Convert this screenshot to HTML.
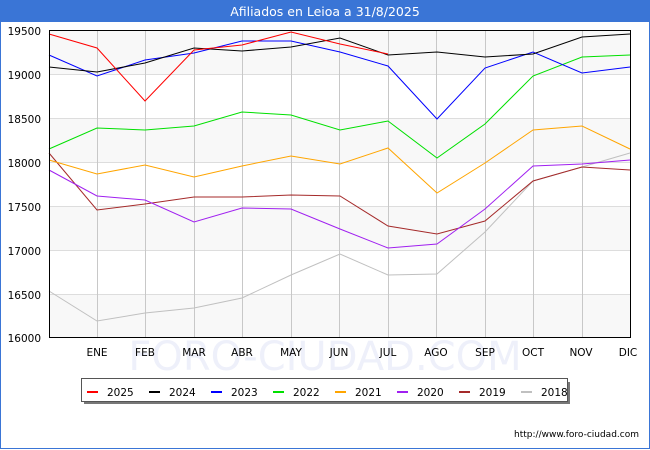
<!DOCTYPE html>
<html><head><meta charset="utf-8"><style>
body{margin:0;width:650px;height:450px;overflow:hidden;font-family:"DejaVu Sans","Liberation Sans",sans-serif;background:#fff}
.wrap{position:absolute;left:0;top:0;width:648px;height:448px;border:1px solid #3a75d6;border-top:none}
</style></head><body>
<div class="wrap"></div>
<svg width="650" height="450" style="position:absolute;left:0;top:0" font-family="DejaVu Sans, Liberation Sans, sans-serif">
<rect x="0" y="0" width="650" height="22" fill="#3a75d6"/>
<text x="325" y="16" fill="#fff" font-size="12.5" text-anchor="middle">Afiliados en Leioa a 31/8/2025</text>
<g fill="#f8f8f8">
<rect x="49" y="31" width="581" height="43"/><rect x="49" y="118" width="581" height="44"/>
<rect x="49" y="206" width="581" height="44"/><rect x="49" y="294" width="581" height="44"/>
</g>
<g stroke="#ddd" stroke-width="1">
<line x1="49" x2="630" y1="74.5" y2="74.5"/><line x1="49" x2="630" y1="118.5" y2="118.5"/>
<line x1="49" x2="630" y1="162.5" y2="162.5"/><line x1="49" x2="630" y1="206.5" y2="206.5"/>
<line x1="49" x2="630" y1="250.5" y2="250.5"/><line x1="49" x2="630" y1="294.5" y2="294.5"/>
</g>
<g stroke="#c8c8c8" stroke-width="1">
<line x1="97.5" x2="97.5" y1="31" y2="338"/><line x1="145.5" x2="145.5" y1="31" y2="338"/>
<line x1="194.5" x2="194.5" y1="31" y2="338"/><line x1="242.5" x2="242.5" y1="31" y2="338"/>
<line x1="291.5" x2="291.5" y1="31" y2="338"/><line x1="339.5" x2="339.5" y1="31" y2="338"/>
<line x1="388.5" x2="388.5" y1="31" y2="338"/><line x1="436.5" x2="436.5" y1="31" y2="338"/>
<line x1="485.5" x2="485.5" y1="31" y2="338"/><line x1="533.5" x2="533.5" y1="31" y2="338"/>
<line x1="582.5" x2="582.5" y1="31" y2="338"/>
</g>
<text x="325" y="370" font-size="40" fill="#eef0fa" text-anchor="middle">FORO-CIUDAD.COM</text>
<g fill="none" stroke-width="1">
<polyline stroke="#c0c0c0" points="49,291 97,321 145,313 194,308 242,298 291,275 340,254 388,275 437,274 485,232 533,181 582,167 630,153"/>
<polyline stroke="#a52a2a" points="49,153 97,210 145,204 194,197 242,197 291,195 340,196 388,226 437,234 485,221 533,181 582,167 630,170"/>
<polyline stroke="#a020f0" points="49,170 97,196 145,200 194,222 242,208 291,209 340,229 388,248 437,244 485,209 533,166 582,164 630,160"/>
<polyline stroke="#ffa500" points="49,160 97,174 145,165 194,177 242,166 291,156 340,164 388,148 437,193 485,163 533,130 582,126 630,149"/>
<polyline stroke="#00e000" points="49,149 97,128 145,130 194,126 242,112 291,115 340,130 388,121 437,158 485,124 533,76 582,57 630,55"/>
<polyline stroke="#0000ff" points="49,55 97,76 145,60 194,53 242,41 291,41 340,52 388,66 437,119 485,68 533,52 582,73 630,67"/>
<polyline stroke="#000" points="49,67 97,72 145,63 194,48 242,51 291,47 340,38 388,55 437,52 485,57 533,54 582,37 630,34"/>
<polyline stroke="#ff0000" points="49,34 97,48 145,101 194,50 242,45 291,32 340,44 388,54"/>
</g>
<rect x="49.5" y="30.5" width="581" height="307" fill="none" stroke="#000"/>
<g font-size="10.5" fill="#000" text-anchor="end">
<text x="41" y="35">19500</text><text x="41" y="79">19000</text><text x="41" y="123">18500</text>
<text x="41" y="167">18000</text><text x="41" y="211">17500</text><text x="41" y="255">17000</text>
<text x="41" y="299">16500</text><text x="41" y="342">16000</text>
</g>
<g font-size="10.5" fill="#000" text-anchor="middle">
<text x="97" y="356">ENE</text><text x="145" y="356">FEB</text><text x="194" y="356">MAR</text>
<text x="242" y="356">ABR</text><text x="291" y="356">MAY</text><text x="339" y="356">JUN</text>
<text x="388" y="356">JUL</text><text x="436" y="356">AGO</text><text x="485" y="356">SEP</text>
<text x="533" y="356">OCT</text><text x="581" y="356">NOV</text><text x="628" y="356">DIC</text>
</g>
<rect x="84" y="382" width="486" height="22" fill="#777"/>
<rect x="81.5" y="378.5" width="486" height="23" fill="#fff" stroke="#555"/>
<g stroke-width="2">
<line x1="87" x2="98" y1="392" y2="392" stroke="#ff0000"/><line x1="149" x2="160" y1="392" y2="392" stroke="#000"/>
<line x1="211" x2="222" y1="392" y2="392" stroke="#0000ff"/><line x1="273" x2="284" y1="392" y2="392" stroke="#00e000"/>
<line x1="335" x2="346" y1="392" y2="392" stroke="#ffa500"/><line x1="397" x2="408" y1="392" y2="392" stroke="#a020f0"/>
<line x1="459" x2="470" y1="392" y2="392" stroke="#a52a2a"/><line x1="521" x2="532" y1="392" y2="392" stroke="#c0c0c0"/>
</g>
<g font-size="10.5" fill="#000">
<text x="107" y="396">2025</text><text x="169" y="396">2024</text><text x="231" y="396">2023</text>
<text x="293" y="396">2022</text><text x="355" y="396">2021</text><text x="417" y="396">2020</text>
<text x="479" y="396">2019</text><text x="541" y="396">2018</text>
</g>
<text x="639" y="437" font-size="9" fill="#000" text-anchor="end">http://www.foro-ciudad.com</text>
</svg>
</body></html>
